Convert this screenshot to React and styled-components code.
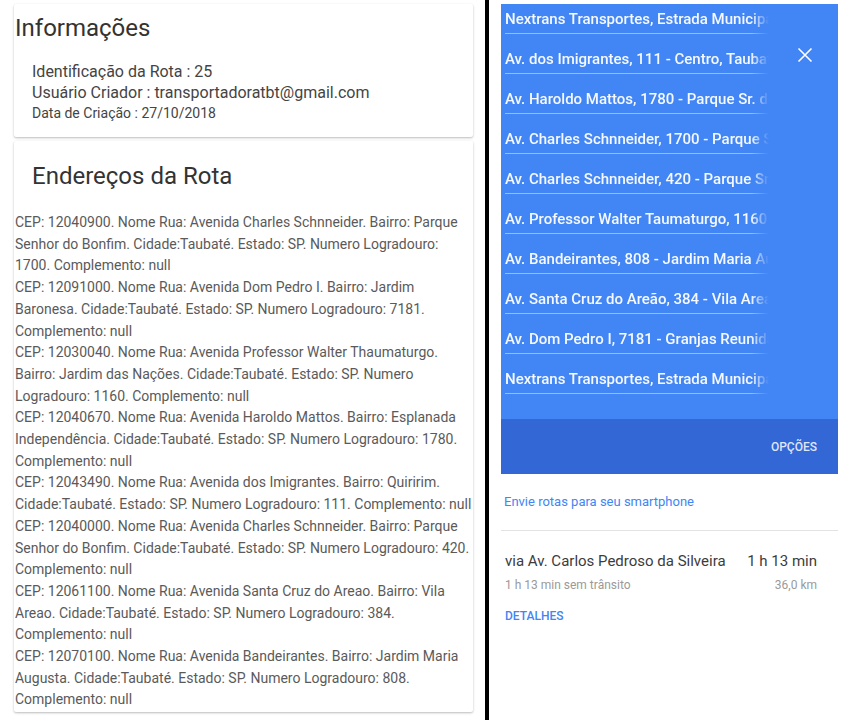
import React from 'react'
import styled, { createGlobalStyle } from 'styled-components'

const GlobalStyle = createGlobalStyle`
    body {
        margin: 0;
        background: #fff;
        font-family: Roboto, "Noto Sans", Arial, sans-serif;
    }
`

const enderecos = [
    'CEP: 12040900. Nome Rua: Avenida Charles Schnneider. Bairro: Parque Senhor do Bonfim. Cidade:Taubaté. Estado: SP. Numero Logradouro: 1700. Complemento: null',
    'CEP: 12091000. Nome Rua: Avenida Dom Pedro I. Bairro: Jardim Baronesa. Cidade:Taubaté. Estado: SP. Numero Logradouro: 7181. Complemento: null',
    'CEP: 12030040. Nome Rua: Avenida Professor Walter Thaumaturgo. Bairro: Jardim das Nações. Cidade:Taubaté. Estado: SP. Numero Logradouro: 1160. Complemento: null',
    'CEP: 12040670. Nome Rua: Avenida Haroldo Mattos. Bairro: Esplanada Independência. Cidade:Taubaté. Estado: SP. Numero Logradouro: 1780. Complemento: null',
    'CEP: 12043490. Nome Rua: Avenida dos Imigrantes. Bairro: Quiririm. Cidade:Taubaté. Estado: SP. Numero Logradouro: 111. Complemento: null',
    'CEP: 12040000. Nome Rua: Avenida Charles Schnneider. Bairro: Parque Senhor do Bonfim. Cidade:Taubaté. Estado: SP. Numero Logradouro: 420. Complemento: null',
    'CEP: 12061100. Nome Rua: Avenida Santa Cruz do Areao. Bairro: Vila Areao. Cidade:Taubaté. Estado: SP. Numero Logradouro: 384. Complemento: null',
    'CEP: 12070100. Nome Rua: Avenida Bandeirantes. Bairro: Jardim Maria Augusta. Cidade:Taubaté. Estado: SP. Numero Logradouro: 808. Complemento: null',
]

const paradas = [
    'Nextrans Transportes, Estrada Municipal',
    'Av. dos Imigrantes, 111 - Centro, Taubaté',
    'Av. Haroldo Mattos, 1780 - Parque Sr. do Bonfim',
    'Av. Charles Schnneider, 1700 - Parque Sr.',
    'Av. Charles Schnneider, 420 - Parque Sr. do',
    'Av. Professor Walter Taumaturgo, 1160',
    'Av. Bandeirantes, 808 - Jardim Maria Augusta',
    'Av. Santa Cruz do Areão, 384 - Vila Areao',
    'Av. Dom Pedro I, 7181 - Granjas Reunidas',
    'Nextrans Transportes, Estrada Municipal',
]

const Page = styled.div`
    display: flex;
    width: 844px;
    height: 720px;
    overflow: hidden;
`

const Left = styled.div`
    width: 485px;
    padding: 4px 0 0 14px;
    box-sizing: border-box;
    display: flex;
    flex-direction: column;
    gap: 4px;
`

const Card = styled.div`
    width: 459px;
    box-sizing: border-box;
    background: #fff;
    border-radius: 2px;
    box-shadow: 0 1px 3px rgba(0, 0, 0, 0.12), 0 1px 2px rgba(0, 0, 0, 0.16);
    padding: ${p => p.$padding};
`

const Title = styled.h2`
    margin: 0;
    font-size: 24px;
    font-weight: 400;
    line-height: 28px;
    color: #333;
    padding-left: ${p => p.$indent || 0}px;
`

const Details = styled.div`
    margin-top: 19px;
    padding-left: 17px;
    color: #444;
`

const DetailLine = styled.div`
    font-size: ${p => p.$small ? 14 : 16}px;
    line-height: ${p => p.$small ? 20 : 21}px;
`

const AddressList = styled.div`
    margin-top: 22px;
`

const Address = styled.p`
    margin: 0;
    font-size: 14px;
    line-height: 21.7px;
    color: #5a5a5a;
`

const Bar = styled.div`
    width: 4px;
    background: #000;
`

const Right = styled.div`
    flex: 1;
    padding: 4px 6px 0 12px;
`

const Directions = styled.div`
    background: #4285f4;
    position: relative;
`

const StopsWindow = styled.div`
    height: 415px;
    overflow: hidden;
    padding-left: 4px;
`

const Stops = styled.ul`
    list-style: none;
    margin: -10px 0 0;
    padding: 0;
    width: 264px;
`

const Stop = styled.li`
    height: 40px;
    box-sizing: border-box;
    padding-top: 16px;
    border-bottom: 1px solid rgba(255, 255, 255, 0.45);
    font-size: 15px;
    font-weight: 500;
    line-height: 18px;
    color: rgba(255, 255, 255, 0.95);
    white-space: nowrap;
    overflow: hidden;
    -webkit-mask-image: linear-gradient(to right, #000 calc(100% - 18px), transparent);
    mask-image: linear-gradient(to right, #000 calc(100% - 18px), transparent);
`

const Close = styled.button`
    position: absolute;
    top: 36px;
    left: 289px;
    width: 30px;
    height: 30px;
    padding: 0;
    border: none;
    background: none;
    display: flex;
    align-items: center;
    justify-content: center;
`

const Footer = styled.div`
    height: 55px;
    background: #3367d6;
    display: flex;
    align-items: center;
    justify-content: flex-end;
    padding-right: 21px;
`

const FooterButton = styled.span`
    font-size: 12px;
    font-weight: 500;
    color: rgba(255, 255, 255, 0.85);
`

const SendLink = styled.div`
    padding: 19px 0 0 3px;
    height: 37px;
    font-size: 13px;
    line-height: 17px;
    color: #4285f4;
    border-bottom: 1px solid #e3e3e3;
`

const Route = styled.div`
    padding: 20px 21px 0 4px;
`

const RouteRow = styled.div`
    display: flex;
    justify-content: space-between;
    font-size: ${p => p.$sub ? 12 : 15}px;
    line-height: ${p => p.$sub ? 16 : 20}px;
    color: ${p => p.$sub ? '#9a9a9a' : '#3c3c3c'};
    margin-top: ${p => p.$sub ? 6 : 0}px;
`

const DetailsLink = styled.div`
    margin-top: 16px;
    font-size: 12px;
    font-weight: 500;
    color: #4285f4;
`

const App = () => {
    return (
        <Page>
            <GlobalStyle />
            <Left>
                <Card $padding="10px 1px 14px">
                    <Title>Informações</Title>
                    <Details>
                        <DetailLine>Identificação da Rota : 25</DetailLine>
                        <DetailLine>Usuário Criador : transportadoratbt@gmail.com</DetailLine>
                        <DetailLine $small>Data de Criação : 27/10/2018</DetailLine>
                    </Details>
                </Card>
                <Card $padding="21px 1px 1px">
                    <Title $indent={17}>Endereços da Rota</Title>
                    <AddressList>
                        {enderecos.map((e, i) => <Address key={i}>{e}</Address>)}
                    </AddressList>
                </Card>
            </Left>
            <Bar />
            <Right>
                <Directions>
                    <StopsWindow>
                        <Stops>
                            {paradas.map((p, i) => <Stop key={i}>{p}</Stop>)}
                        </Stops>
                    </StopsWindow>
                    <Close aria-label="Fechar">
                        <svg width="16" height="16" viewBox="0 0 16 16">
                            <path d="M1.5 1.5 L14.5 14.5 M14.5 1.5 L1.5 14.5" stroke="#fff" strokeWidth="1.6" fill="none" />
                        </svg>
                    </Close>
                    <Footer>
                        <FooterButton>OPÇÕES</FooterButton>
                    </Footer>
                </Directions>
                <SendLink>Envie rotas para seu smartphone</SendLink>
                <Route>
                    <RouteRow>
                        <span>via Av. Carlos Pedroso da Silveira</span>
                        <span>1 h 13 min</span>
                    </RouteRow>
                    <RouteRow $sub>
                        <span>1 h 13 min sem trânsito</span>
                        <span>36,0 km</span>
                    </RouteRow>
                    <DetailsLink>DETALHES</DetailsLink>
                </Route>
            </Right>
        </Page>
    )
}

export default App
